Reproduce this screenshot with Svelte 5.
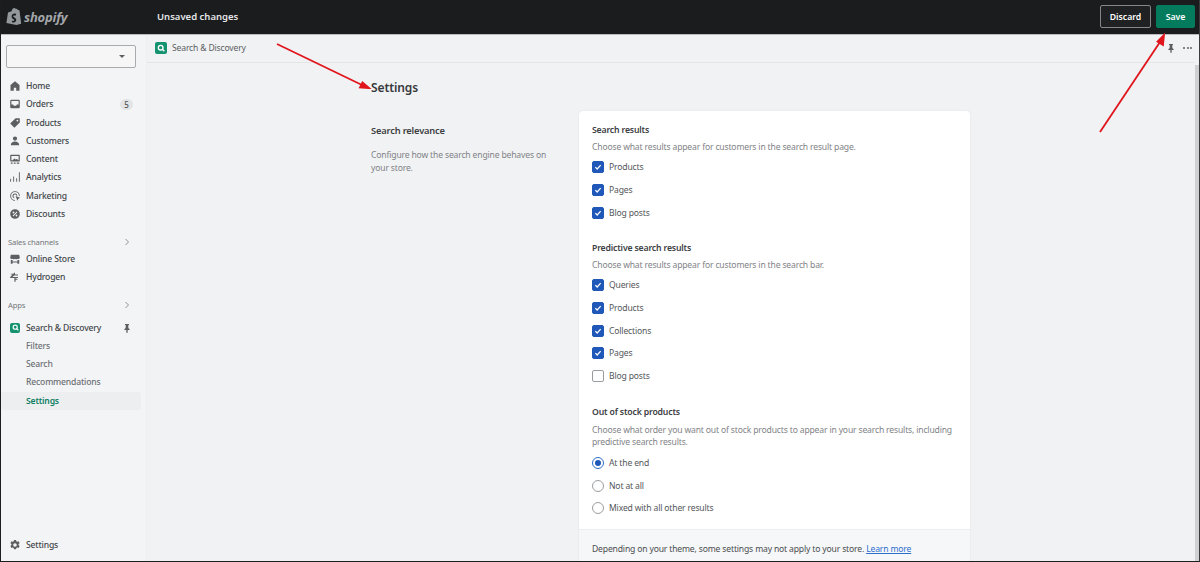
<script>
  const navMain = [
    { label: "Home", icon: "home" },
    { label: "Orders", icon: "orders", badge: 5 },
    { label: "Products", icon: "products" },
    { label: "Customers", icon: "customers" },
    { label: "Content", icon: "content" },
    { label: "Analytics", icon: "analytics" },
    { label: "Marketing", icon: "marketing" },
    { label: "Discounts", icon: "discounts" }
  ];
  const channels = [
    { label: "Online Store", icon: "store" },
    { label: "Hydrogen", icon: "hydrogen" }
  ];
  const subNav = ["Filters", "Search", "Recommendations", "Settings"];

  const icons = {
    home: "M10 2 2.500 8.500V17a1 1 0 0 0 1 1H8v-5h4v5h4.500a1 1 0 0 0 1-1V8.500z",
    orders: "M4 3h12a2 2 0 0 1 2 2v10a2 2 0 0 1-2 2H4a2 2 0 0 1-2-2V5a2 2 0 0 1 2-2zm0 2v6h3l1 2h4l1-2h3V5z",
    products: "M11 2h6a1 1 0 0 1 1 1v6l-9 9-7-7zm3 2.5a1.5 1.5 0 1 0 0 3 1.5 1.5 0 0 0 0-3z",
    customers: "M10 2.5a3.500 3.500 0 1 1 0 7 3.500 3.500 0 0 1 0-7zM3 17c0-4 3-6 7-6s7 2 7 6z",
    content: "M3 3h14a1 1 0 0 1 1 1v9a1 1 0 0 1-1 1H3a1 1 0 0 1-1-1V4a1 1 0 0 1 1-1zm1 2v7h2l3-3 2 2 2-1 3 2V5zM3 16h3v2H3zm5 0h3v2H8zm5 0h4v2h-4z",
    analytics: "M2 13h1.500v5H2zm5-4h1.500v9H7zm5 3h1.500v6H12zm4.500-10H18v16h-1.500z",
    marketing: "M10 2a8 8 0 0 1 8 8h-1.500A6.500 6.500 0 1 0 10 16.500V18a8 8 0 0 1 0-16zm0 4a4 4 0 0 1 4 3.500h-1.500A2.500 2.500 0 1 0 9 12.300L8.500 13.800A4 4 0 0 1 10 6zm1 4 7.500 3-3 1.500L14 18z",
    discounts: "M10 2a8 8 0 1 1 0 16 8 8 0 0 1 0-16zm3 4-7 7 1 1 7-7zM7.500 6a1.500 1.500 0 1 0 0 3 1.500 1.500 0 0 0 0-3zm5 5a1.500 1.500 0 1 0 0 3 1.500 1.500 0 0 0 0-3z",
    store: "M3 3h14l1 5a2.500 2.500 0 0 1-4 1.500 3 3 0 0 1-4 0 3 3 0 0 1-4 0A2.500 2.500 0 0 1 2 8zM3 11.500h3V14h8v-2.500h3V18h-3v-2H6v2H3z",
    hydrogen: "M8 3h2v3h5v1.500H8.500L6 10h9v1.500h-4V13h3v1.500h-3V18H9v-6.500H2V10l4-4H3V4.500h5z"
  };
</script>

<div class="screen">
  <header class="topbar">
    <div class="brand">
      <svg class="bag" viewBox="0 0 20 22" width="16" height="19" aria-hidden="true">
        <path d="M2.500 6 7 4.500C7.500 2 9 .5 10.500.5c.8 0 1.300.5 1.700 1.200l1.300-.3 1.500 1.600 1.800.2L19 20l-6 1.500L.5 19z" fill="#95989b" />
        <path d="M12.800 7.600 12 10c-1.200-.6-3-.5-3 .6 0 1.400 3.800 1.700 3.800 4.900 0 2.600-2.700 3.800-5.500 2.800l.7-2.300c1.200.8 2.400.5 2.400-.3 0-1.500-3.400-1.700-3.400-4.700 0-2.700 2.800-4.200 5.300-3.400z" fill="#1a1c1d" />
      </svg>
      <span class="wordmark">shopify</span>
    </div>
    <div class="status">Unsaved changes</div>
    <div class="actions">
      <button class="discard">Discard</button>
      <button class="save">Save</button>
    </div>
  </header>

  <div class="body">
    <aside class="sidebar">
      <div class="store-select">
        <span class="caret"></span>
      </div>

      <nav class="group">
        {#each navMain as item}
          <div class="row">
            <svg class="ico" viewBox="0 0 20 20" aria-hidden="true"><path d={icons[item.icon]} fill-rule="evenodd" /></svg>
            <span>{item.label}</span>
            {#if item.badge}<span class="badge">{item.badge}</span>{/if}
          </div>
        {/each}
      </nav>

      <div class="section-head first">
        <span>Sales channels</span>
        <svg viewBox="0 0 8 10" width="6" height="8" aria-hidden="true"><path d="M2 1l4 4-4 4" fill="none" stroke="#8c9196" stroke-width="1.300" /></svg>
      </div>
      <nav class="group">
        {#each channels as item}
          <div class="row">
            <svg class="ico" viewBox="0 0 20 20" aria-hidden="true"><path d={icons[item.icon]} fill-rule="evenodd" /></svg>
            <span>{item.label}</span>
          </div>
        {/each}
      </nav>

      <div class="section-head apps">
        <span>Apps</span>
        <svg viewBox="0 0 8 10" width="6" height="8" aria-hidden="true"><path d="M2 1l4 4-4 4" fill="none" stroke="#8c9196" stroke-width="1.300" /></svg>
      </div>
      <nav class="group app">
        <div class="row">
          <span class="app-tile small">
            <svg viewBox="0 0 12 12" width="7" height="7" aria-hidden="true"><circle cx="5.500" cy="5.500" r="3.500" fill="none" stroke="#fff" stroke-width="2" /><path d="M8 8l3 3" stroke="#fff" stroke-width="2" /></svg>
          </span>
          <span>Search &amp; Discovery</span>
          <svg class="pin" viewBox="0 0 12 14" width="8" height="10" aria-hidden="true"><path d="M3 1h6v1.500H8V7l2 2v1H7v4H5v-4H2V9l2-2V2.500H3z" fill="#5c5f62" /></svg>
        </div>
        {#each subNav as label}
          <div class="row sub" class:current={label === "Settings"}>{label}</div>
        {/each}
      </nav>

      <div class="row footer-row">
        <svg class="ico" viewBox="0 0 20 20" aria-hidden="true">
          <path fill-rule="evenodd" d="M8.300 1.500h3.400l.5 2.400 1.500.8 2.300-.8 1.700 3-1.800 1.600v1.700l1.800 1.600-1.700 3-2.300-.8-1.500.8-.5 2.400H8.300l-.5-2.400-1.500-.8-2.300.8-1.700-3 1.800-1.600V8.500L2.300 6.900l1.700-3 2.300.8 1.500-.8zM10 7a3 3 0 1 0 0 6 3 3 0 0 0 0-6z" />
        </svg>
        <span>Settings</span>
      </div>
    </aside>

    <main class="main">
      <div class="appbar">
        <span class="app-tile">
          <svg viewBox="0 0 12 12" width="8" height="8" aria-hidden="true"><circle cx="5.500" cy="5.500" r="3.500" fill="none" stroke="#fff" stroke-width="2" /><path d="M8 8l3 3" stroke="#fff" stroke-width="2" /></svg>
        </span>
        <span class="app-name">Search &amp; Discovery</span>
        <svg class="bar-pin" viewBox="0 0 12 14" width="8" height="10" aria-hidden="true"><path d="M3 1h6v1.500H8V7l2 2v1H7v4H5v-4H2V9l2-2V2.500H3z" fill="#5c5f62" /></svg>
        <span class="dots"><i></i><i></i><i></i></span>
      </div>

      <div class="page">
        <h1>Settings</h1>
        <div class="layout">
          <div class="intro">
            <h2>Search relevance</h2>
            <p>Configure how the search engine behaves on your store.</p>
          </div>

          <section class="card">
            <div class="card-body">
              <h3>Search results</h3>
              <p class="help">Choose what results appear for customers in the search result page.</p>
              <div class="opts">
                {@render check("Products", true)}
                {@render check("Pages", true)}
                {@render check("Blog posts", true)}
              </div>

              <h3 class="next">Predictive search results</h3>
              <p class="help">Choose what results appear for customers in the search bar.</p>
              <div class="opts">
                {@render check("Queries", true)}
                {@render check("Products", true)}
                {@render check("Collections", true)}
                {@render check("Pages", true)}
                {@render check("Blog posts", false)}
              </div>

              <h3 class="next">Out of stock products</h3>
              <p class="help long">Choose what order you want out of stock products to appear in your search results, including predictive search results.</p>
              <div class="opts">
                {@render radio("At the end", true)}
                {@render radio("Not at all", false)}
                {@render radio("Mixed with all other results", false)}
              </div>
            </div>
            <div class="card-foot">
              Depending on your theme, some settings may not apply to your store. <a href="#learn">Learn more</a>
            </div>
          </section>
        </div>
      </div>
    </main>
    <div class="scrollbar"></div>
  </div>

  <svg class="arrows" viewBox="0 0 1200 562" aria-hidden="true">
    <g stroke="#e0161c" stroke-width="1.800" fill="#e0161c">
      <path d="M277 44 362 85" fill="none" />
      <path d="M369 88 360 87.500 362.500 82.500z" />
      <path d="M1100 132 1160 42" fill="none" />
      <path d="M1164 35 1163 45 1157.500 41.500z" />
    </g>
  </svg>
</div>

{#snippet check(label, on)}
  <div class="opt">
    <span class="box" class:on>
      {#if on}
        <svg viewBox="0 0 12 12" width="10" height="10" aria-hidden="true"><path d="M2.800 6.200 5 8.400l4.200-4.600" fill="none" stroke="#fff" stroke-width="1.500" /></svg>
      {/if}
    </span>
    <span>{label}</span>
  </div>
{/snippet}

{#snippet radio(label, on)}
  <div class="opt">
    <span class="dot" class:on></span>
    <span>{label}</span>
  </div>
{/snippet}

<style>
  :global(body) {
    margin: 0;
    background: #f1f2f4;
  }

  .screen {
    position: relative;
    display: flex;
    flex-direction: column;
    height: 562px;
    box-sizing: border-box;
    overflow: hidden;
    border-left: 1px solid #1c1e1f;
    border-right: 1px solid #3a3c3e;
    border-bottom: 1px solid #1c1e1f;
    font-family: "Noto Sans", "Liberation Sans", sans-serif;
    font-size: 8.600px;
    letter-spacing: -0.17px;
    color: #3d4043;
  }

  .topbar {
    flex: none;
    display: flex;
    align-items: center;
    height: 35px;
    box-sizing: border-box;
    padding: 0 4px 1px 5px;
    background: #1a1c1e;
    border-bottom: 1px solid #b9bcbf;
  }

  .brand {
    display: flex;
    align-items: center;
    gap: 2px;
    width: 151px;
  }

  .wordmark {
    font-family: "Open Sans", sans-serif;
    font-size: 13px;
    font-weight: 700;
    font-style: italic;
    color: #a3a6a9;
    letter-spacing: -0.2px;
  }

  .status {
    color: #e6e7e8;
    font-size: 9.500px;
    font-weight: 600;
    letter-spacing: 0;
  }

  .actions {
    display: flex;
    gap: 5px;
    margin-left: auto;
  }

  .actions button {
    height: 23px;
    border-radius: 2px;
    font: inherit;
    font-size: 8.700px;
    font-weight: 600;
    color: #fff;
    padding: 0;
  }

  .discard {
    width: 51px;
    background: #1f2122;
    border: 1px solid #85888b;
  }

  .save {
    width: 39px;
    background: #047b5d;
    border: 1px solid #047b5d;
  }

  .body {
    flex: 1;
    display: flex;
    min-height: 0;
  }

  .sidebar {
    flex: none;
    display: flex;
    flex-direction: column;
    width: 146px;
    box-sizing: border-box;
    padding: 10px 5px 7px 0;
    background: #f3f4f6;
    border-right: 1px solid #eceef0;
  }

  .store-select {
    display: flex;
    align-items: center;
    justify-content: flex-end;
    box-sizing: border-box;
    height: 23px;
    width: 130px;
    margin: 0 0 9px 5px;
    padding-right: 10px;
    background: #f6f6f7;
    border: 1px solid #a9acaf;
    border-radius: 2px;
  }

  .caret {
    border-left: 3px solid transparent;
    border-right: 3px solid transparent;
    border-top: 3.500px solid #5c5f62;
  }

  .group {
    display: flex;
    flex-direction: column;
  }

  .row {
    display: flex;
    align-items: center;
    height: 18.250px;
    padding-left: 8px;
    font-weight: 500;
    color: #43474a;
    white-space: nowrap;
  }

  .ico {
    width: 12px;
    height: 12px;
    flex: none;
    margin-right: 5px;
    fill: #5c5f62;
  }

  .badge {
    margin-left: auto;
    margin-right: 8px;
    width: 13px;
    height: 11px;
    border-radius: 6px;
    background: #e2e4e6;
    text-align: center;
    line-height: 11px;
    font-size: 8px;
    color: #54575a;
  }

  .section-head {
    display: flex;
    align-items: center;
    justify-content: space-between;
    padding: 0 11px 0 7px;
    font-size: 7.700px;
    color: #74777a;
    height: 12px;
  }

  .section-head.first {
    margin: 13px 0 2px;
  }

  .section-head.apps {
    margin: 12px 0 8px;
  }

  .app-tile {
    display: flex;
    align-items: center;
    justify-content: center;
    flex: none;
    width: 12px;
    height: 12px;
    border-radius: 2px;
    background: #15926f;
  }

  .app-tile.small {
    width: 10px;
    height: 10px;
    margin: 0 6px 0 1px;
  }

  .pin {
    margin-left: auto;
    margin-right: 10px;
  }

  .sub {
    padding-left: 25px;
    color: #6d7175;
  }

  .sub.current {
    color: #0f7f62;
    font-weight: 600;
    background: #eceef0;
    border-radius: 0 3px 3px 0;
  }

  .footer-row {
    margin-top: auto;
  }

  .main {
    flex: 1;
    min-width: 0;
    display: flex;
    flex-direction: column;
    padding-right: 1px;
  }

  .appbar {
    flex: none;
    display: flex;
    align-items: center;
    height: 28px;
    box-sizing: border-box;
    padding: 0 2px 2px 8px;
    border-bottom: 1px solid #e3e5e7;
  }

  .app-name {
    margin-left: 5px;
    color: #5c5f62;
  }

  .bar-pin {
    margin-left: auto;
    margin-right: 8px;
  }

  .dots {
    display: flex;
    gap: 1.500px;
  }

  .dots i {
    width: 2px;
    height: 2px;
    border-radius: 50%;
    background: #5c5f62;
  }

  .page {
    width: 599px;
    margin: 0 auto;
  }

  h1 {
    margin: 17px 0 0;
    font-size: 12px;
    line-height: 16px;
    font-weight: 600;
    color: #36393b;
    letter-spacing: -0.1px;
  }

  .layout {
    display: grid;
    grid-template-columns: 208px 391px;
    margin-top: 15px;
  }

  .intro {
    padding-top: 14px;
    padding-right: 20px;
  }

  h2 {
    margin: 0 0 12px;
    font-size: 9.300px;
    line-height: 12px;
    font-weight: 600;
    color: #3d4043;
  }

  .intro p {
    margin: 0;
    line-height: 12.500px;
    color: #7f8387;
  }

  .card {
    background: #fff;
    border-radius: 4px 4px 0 0;
    box-shadow: 0 0 2px rgba(60, 64, 67, 0.1);
  }

  .card-body {
    padding: 13px 13px 9px;
  }

  h3 {
    margin: 0;
    font-size: 8.700px;
    line-height: 12px;
    font-weight: 600;
    color: #3d4043;
  }

  h3.next {
    margin-top: 18px;
  }

  .help {
    margin: 5px 0 2.500px;
    line-height: 12.500px;
    color: #7f8387;
  }

  .help.long {
    margin: 6px 0 3px;
  }

  .opts {
    display: flex;
    flex-direction: column;
  }

  .opt {
    display: flex;
    align-items: center;
    gap: 5px;
    height: 22.700px;
    color: #54575a;
  }

  .box,
  .dot {
    flex: none;
    box-sizing: border-box;
    width: 12px;
    height: 12px;
    display: flex;
    align-items: center;
    justify-content: center;
    background: #fff;
    border: 1px solid #9a9da0;
  }

  .box {
    border-radius: 2px;
  }

  .box.on {
    background: #1f58b8;
    border-color: #1f58b8;
  }

  .dot {
    border-radius: 50%;
  }

  .dot.on {
    border-color: #2c6ecb;
  }

  .dot.on::after {
    content: "";
    width: 6px;
    height: 6px;
    border-radius: 50%;
    background: #1f58b8;
  }

  .card-foot {
    padding: 13px 13px 20px;
    background: #f6f7f9;
    border-top: 1px solid #eceef0;
    color: #4a4d50;
    line-height: 12px;
  }

  .card-foot a {
    color: #2c6ecb;
  }

  .scrollbar {
    flex: none;
    width: 4px;
    background: #cfd0d2;
    margin-top: 30px;
  }

  .arrows {
    position: absolute;
    left: -1px;
    top: 0;
    width: 1200px;
    height: 562px;
    pointer-events: none;
  }
</style>
